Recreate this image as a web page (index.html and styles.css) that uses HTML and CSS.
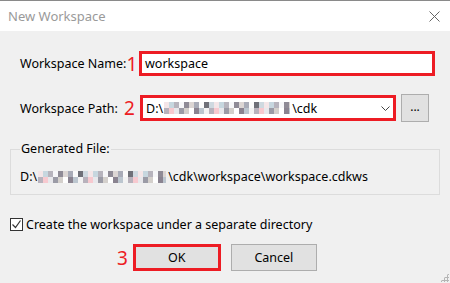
FILE: index.html
```html
<!DOCTYPE html>
<html lang="en">
<head>
    <meta charset="UTF-8">
    <title>New Workspace</title>
    <link rel="stylesheet" href="styles.css">
</head>
<body>
<div class="window">
    <!-- title bar -->
    <div class="titlebar">
        <span class="title">New Workspace</span>
        <svg class="close" width="11" height="11" viewBox="0 0 11 11">
            <path d="M0.5 0.5 L10.5 10.5 M10.5 0.5 L0.5 10.5" stroke="#666" stroke-width="1" fill="none"/>
        </svg>
    </div>

    <div class="content">
        <div class="form-row row-name">
            <div class="label-cell">
                <span class="label">Workspace Name:</span><span class="mark">1</span>
            </div>
            <div class="textbox marked">workspace</div>
        </div>

        <div class="form-row row-path">
            <div class="label-cell">
                <span class="label">Workspace Path:</span><span class="mark mark-gap">2</span>
            </div>
            <div class="combo marked">
                <span>D:\</span><span class="mosaic"></span><span>\cdk</span>
                <svg class="chevron" width="9" height="5" viewBox="0 0 9 5">
                    <path d="M0.5 0.5 L4.5 4.5 L8.5 0.5" stroke="#444" stroke-width="1" fill="none"/>
                </svg>
            </div>
            <div class="browse">...</div>
        </div>

        <fieldset class="group">
            <legend>Generated File:</legend>
            <div class="gen-path"><span>D:\</span><span class="mosaic mosaic-wide"></span><span>\cdk\workspace\workspace.cdkws</span></div>
        </fieldset>

        <div class="check-row">
            <span class="checkbox">
                <svg width="11" height="11" viewBox="0 0 11 11">
                    <path d="M1.5 5.5 L4.5 8.5 L9.5 1.5" stroke="#333" stroke-width="1.2" fill="none"/>
                </svg>
            </span>
            <span>Create the workspace under a separate directory</span>
        </div>

        <div class="button-row">
            <span class="mark">3</span>
            <div class="btn btn-ok">OK</div>
            <div class="btn btn-cancel">Cancel</div>
        </div>
    </div>
    <div class="grip"></div>
</div>
</body>
</html>
```

FILE: styles.css
```css
body {
    margin: 0;
    font-family: "Noto Sans", "Open Sans", sans-serif;
    font-size: 12.5px;
    color: #000;
    background: #f0f0f0;
}
.window {
    position: relative;
    width: 450px;
    height: 283px;
    overflow: hidden;
    background: #f0f0f0;
}
.titlebar {
    height: 30px;
    border-top: 1px solid #8a8a8a;
    background: #fff;
    display: flex;
    align-items: center;
    justify-content: space-between;
    padding: 0 10px 0 8px;
}
.title {
    color: #9a9a9a;
    font-size: 13px;
}
.close {
    display: block;
}
.content {
    padding: 20px 10px 0 10px;
}
.form-row {
    display: flex;
    align-items: center;
    padding-left: 10px;
}
.row-name {
    height: 25px;
}
.label-cell {
    width: 119px;
    flex-shrink: 0;
    display: flex;
    align-items: center;
    white-space: nowrap;
}
.mark {
    color: #ed1c24;
    font-size: 19px;
    line-height: 20px;
}
.mark-gap {
    margin-left: 6px;
}
.marked {
    border: 3px solid #ed1c24;
    background: #fff;
}
.textbox {
    width: 287px;
    height: 19px;
    line-height: 19px;
    padding-left: 3px;
}
.row-path {
    margin-top: 18px;
    height: 28px;
}
.row-path .label-cell {
    width: 120px;
}
.combo {
    width: 247px;
    height: 20px;
    padding-left: 3px;
    display: flex;
    align-items: center;
    white-space: nowrap;
}
.combo .mosaic {
    width: 126px;
}
.chevron {
    margin-left: auto;
    margin-right: 3px;
}
.browse {
    margin-left: 5px;
    width: 26px;
    height: 26px;
    border: 1px solid #adadad;
    background: #e1e1e1;
    text-align: center;
    line-height: 24px;
    font-size: 12px;
}
.mosaic {
    display: inline-block;
    width: 130px;
    height: 12px;
    margin: 0 2px 0 1px;
    background:
        repeating-linear-gradient(to right, #f4e6e8 0 5px, #c7d7df 5px 10px, #b7b4bd 10px 15px, #f7f7f9 15px 20px, #8f8b96 20px 25px, #dcd6d4 25px 30px, #a9acb8 30px 35px, #fbfbfb 35px 40px, #6f7078 40px 45px, #cfd9e0 45px 50px) 0 0 / 100% 6px no-repeat,
        repeating-linear-gradient(to right, #b8b2bc 0 5px, #f7c9cf 5px 10px, #e8e8ec 10px 15px, #9b9ba6 15px 20px, #d4d0cc 20px 25px, #fff 25px 30px, #8a8390 30px 35px, #bcc6cf 35px 40px, #f3f3f3 40px 45px) 0 6px / 100% 6px no-repeat;
}
.gen-path .mosaic {
    width: 128px;
}
.group {
    margin: 18px 0 0 0;
    box-sizing: border-box;
    border: 1px solid #dcdcdc;
    padding: 10px 9px 8px 9px;
    width: 430px;
}
.group legend {
    padding: 0 1px;
    margin-left: 0;
    line-height: 18px;
}
.gen-path {
    display: flex;
    align-items: center;
    line-height: 18px;
    white-space: nowrap;
}
.check-row {
    display: flex;
    align-items: center;
    gap: 3px;
    margin-top: 21px;
    height: 16px;
}
.checkbox {
    width: 11px;
    height: 11px;
    border: 1px solid #333;
    background: #fff;
    display: block;
}
.checkbox svg {
    display: block;
}
.button-row {
    display: flex;
    align-items: center;
    margin-top: 12px;
    padding-left: 107px;
}
.button-row .mark {
    margin-right: 5px;
}
.btn {
    height: 25px;
    line-height: 25px;
    text-align: center;
    background: #e1e1e1;
    border: 1px solid #adadad;
}
.btn-ok {
    width: 82px;
    height: 21px;
    line-height: 21px;
    border: 3px solid #ed1c24;
}
.btn-cancel {
    width: 84px;
    margin-left: 10px;
}
.grip {
    position: absolute;
    right: 1px;
    bottom: 1px;
    width: 9px;
    height: 9px;
    background:
        radial-gradient(circle, #b5b5b5 1px, transparent 1.2px) 0 0 / 3px 3px;
    clip-path: polygon(100% 0, 100% 100%, 0 100%);
}
```
